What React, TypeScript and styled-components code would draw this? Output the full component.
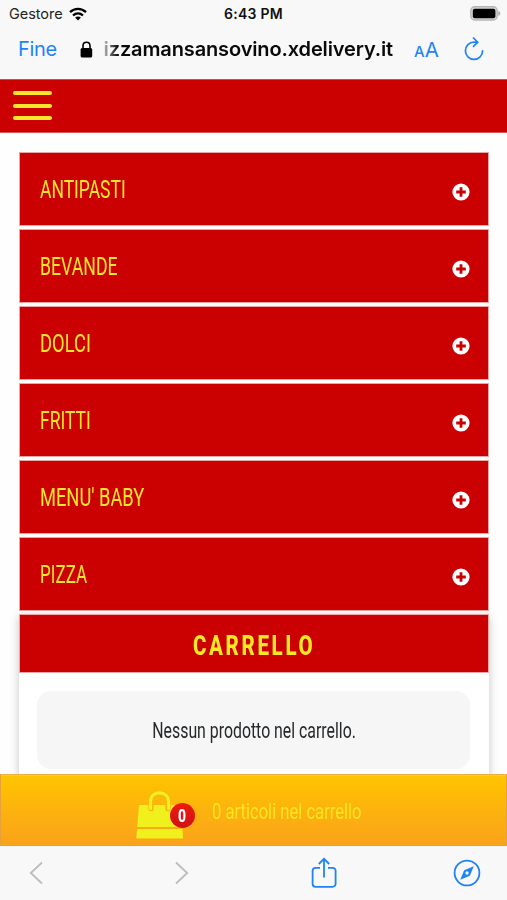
import React from 'react';
import styled, { createGlobalStyle } from 'styled-components';

const GlobalStyle = createGlobalStyle`
  * { box-sizing: border-box; }
  body { margin: 0; background: #fff; }
`;

const red = '#cb0000';
const yellow = '#ffe62b';
const blue = '#1f83f5';

const Screen = styled.div`
  display: flex;
  flex-direction: column;
  width: 507px;
  height: 900px;
  overflow: hidden;
  background: #fefefe;
  font-family: Roboto, 'Liberation Sans', sans-serif;
`;

const BrowserTop = styled.header`
  flex: none;
  height: 79px;
  background: #f8f8f8;
  font-family: Inter, 'Liberation Sans', sans-serif;
`;

const StatusBar = styled.div`
  display: grid;
  grid-template-columns: 1fr auto 1fr;
  align-items: center;
  height: 27px;
  padding: 0 6px 0 9px;
`;

const Carrier = styled.div`
  display: flex;
  align-items: center;
  gap: 6px;
  font-size: 14.5px;
  letter-spacing: -0.05px;
  color: #222;
`;

const Clock = styled.div`
  font-size: 14px;
  font-weight: 600;
  letter-spacing: 0.25px;
  margin-right: 3px;
  color: #111;
`;

const BatterySlot = styled.div`
  display: flex;
  justify-content: flex-end;
`;

const AddressBar = styled.div`
  display: flex;
  align-items: center;
  height: 44px;
  padding-left: 18px;
`;

const Done = styled.a`
  width: 62px;
  font-size: 20px;
  letter-spacing: -0.35px;
  color: ${blue};
`;

const Address = styled.div`
  width: 293px;
  margin-left: 7px;
  overflow: hidden;
  display: flex;
  justify-content: flex-end;
  white-space: nowrap;
  font-size: 20px;
  line-height: 28px;
  font-weight: 600;
  letter-spacing: -0.13px;
  color: #0a0a0a;
  mask-image: linear-gradient(to right, transparent 0, rgba(0, 0, 0, 0.4) 6px, #000 18px);
`;

const TextSize = styled.div`
  display: flex;
  align-items: baseline;
  margin-left: 21px;
  width: 50px;
  color: ${blue};
  font-size: 20.5px;
`;

const SmallA = styled.span`
  font-size: 15px;
  font-weight: 500;
`;

const SiteHeader = styled.div`
  flex: none;
  display: flex;
  align-items: flex-start;
  height: 54px;
  padding: 11px 0 0 13px;
  background: ${red};
  border-top: 1px solid #d0494b;
  border-bottom: 1px solid #dc5555;
`;

const MenuButton = styled.div`
  display: flex;
  flex-direction: column;
  justify-content: space-between;
  width: 39px;
  height: 29px;
`;

const MenuLine = styled.span`
  height: 4px;
  border-radius: 2px;
  background: ${yellow};
`;

const Content = styled.main`
  flex: 1;
  min-height: 0;
  overflow: hidden;
  padding: 19px 18px 0 19px;
`;

const Category = styled.div`
  display: flex;
  align-items: center;
  justify-content: space-between;
  height: 74px;
  margin-bottom: 3px;
  padding: 0 18px 0 20px;
  background: ${red};
  background-clip: padding-box;
  border: 1px solid rgba(203, 0, 0, 0.35);
`;

const Narrow = styled.span<{ $scale: number; $center?: boolean }>`
  display: inline-block;
  white-space: nowrap;
  transform: scaleX(${(p) => p.$scale});
  transform-origin: ${(p) => (p.$center ? 'center' : 'left center')};
`;

const CategoryName = styled(Narrow)`
  font-size: 26.5px;
  font-weight: 450;
  line-height: 32px;
  color: ${yellow};
`;

const PlusSlot = styled.div`
  display: flex;
  padding-top: 5px;
`;

const Cart = styled.section`
  height: 220px;
  background: #fff;
  box-shadow: 0 2px 9px rgba(0, 0, 0, 0.22);
`;

const CartTitle = styled.div`
  display: flex;
  align-items: center;
  justify-content: center;
  height: 59px;
  padding-top: 4px;
  background: ${red};
  background-clip: padding-box;
  border: 1px solid rgba(203, 0, 0, 0.35);
`;

const CartTitleText = styled(Narrow)`
  font-size: 27.5px;
  font-weight: 800;
  letter-spacing: 3.6px;
  color: #fbe824;
`;

const EmptyCart = styled.div`
  display: flex;
  align-items: center;
  justify-content: center;
  height: 78px;
  margin: 18px 19px 0 18px;
  padding: 1px 0 0 1px;
  border-radius: 14px;
  background: #f6f6f6;
`;

const EmptyText = styled(Narrow)`
  font-size: 21.5px;
  font-weight: 450;
  color: #25282b;
`;

const CartBar = styled.div`
  flex: none;
  display: flex;
  height: 72px;
  padding: 16px 0 0 135px;
  background: linear-gradient(#ffc400, #faa21b);
  border: 1px solid #e6a13a;
  border-top-color: #efae45;
  box-shadow: inset 0 1px 0 #ffca3c;
`;

const BagSlot = styled.div`
  position: relative;
  width: 76px;
  height: 48px;
`;

const Badge = styled.div`
  position: absolute;
  left: 34px;
  top: 12px;
  width: 25px;
  height: 25px;
  display: flex;
  align-items: center;
  justify-content: center;
  border-radius: 50%;
  background: linear-gradient(#f01a0c, #cf1018);
  color: #fff;
  font-size: 17.5px;
  font-weight: 800;
`;

const CartBarText = styled(Narrow)`
  margin-top: 8px;
  height: 26px;
  line-height: 26px;
  font-size: 21.5px;
  color: #fce51f;
`;

const BrowserBottom = styled.nav`
  flex: none;
  display: grid;
  grid-template-columns: 146px 136px 142px 28px;
  align-items: center;
  height: 54px;
  padding-left: 29px;
  background: #f8f8f8;
`;

const Plus = () => (
  <svg width="18" height="18" viewBox="0 0 18 18">
    <circle cx="9" cy="9" r="8.6" fill="#fff" />
    <path d="M9 4.2v9.6M4.2 9h9.6" stroke={red} strokeWidth="2.8" />
  </svg>
);

const Wifi = () => (
  <svg width="18" height="14" viewBox="0 0 18 14" fill="none" stroke="#000" strokeWidth="2.3">
    <path d="M1 5.2C5.6 .8 12.4 .8 17 5.2M4 8.5c2.9-2.7 7.1-2.7 10 0" />
    <path d="M9 13.6l-2.9-3.1c1.6-1.5 4.2-1.5 5.8 0z" fill="#000" stroke="none" />
  </svg>
);

const Battery = () => (
  <svg width="31" height="15" viewBox="0 0 31 15">
    <rect x=".8" y=".8" width="26.4" height="13.2" rx="4" fill="#d8d8d8" stroke="#b5b5b5" strokeWidth="1.4" />
    <rect x="2.8" y="2.7" width="22.6" height="9.5" rx="2" fill="#000" />
    <path d="M28.3 5c2.6.6 2.6 4.2 0 4.8z" fill="#aaa" />
  </svg>
);

const Lock = () => (
  <svg width="13" height="17" viewBox="0 0 13 17">
    <path d="M3 8V4.9C3 .1 10 .1 10 4.9V8" fill="none" stroke="#000" strokeWidth="1.6" />
    <rect x=".6" y="7" width="11.6" height="9.5" rx="1.6" fill="#000" />
  </svg>
);

const Reload = () => (
  <svg width="20" height="24" viewBox="0 0 20 24" fill="none" stroke={blue} strokeWidth="1.7" strokeLinecap="round">
    <path d="M13.2 5.2H10a8.6 8.6 0 1 0 8.6 8.6" />
    <path d="M9.5 1l4.2 4.2-4.2 4.2" />
  </svg>
);

const Bag = () => (
  <svg width="48" height="48" viewBox="0 0 48 48">
    <path d="M3 14h41l2.2 22H1.2z M1 38h45.5l.5 9.5H.3z" fill="#f0f01c" />
    <path d="M15 17.5V10c0-10.3 17-10.3 17 0v7.5" fill="none" stroke="#fbb40e" strokeWidth="5.4" strokeLinecap="round" />
    <path d="M14.5 17.5V10c0-10.8 18-10.8 18 0v7.5" fill="none" stroke="#f0f01c" strokeWidth="3.2" strokeLinecap="round" />
  </svg>
);

const Chevron = ({ d }: { d: string }) => (
  <svg width="14" height="24" viewBox="0 0 14 24" fill="none" stroke="#bdbdbd" strokeWidth="1.8">
    <path d={d} />
  </svg>
);

const Share = () => (
  <svg width="26" height="32" viewBox="0 0 26 32" fill="none" stroke={blue} strokeWidth="1.8">
    <path d="M9 10.8H4.6a3 3 0 0 0-3 3v13a3 3 0 0 0 3 3h17a3 3 0 0 0 3-3v-13a3 3 0 0 0-3-3H17" />
    <path d="M13 20.5V2M7.8 7L13 1.8 18.2 7" />
  </svg>
);

const Compass = () => (
  <svg width="28" height="28" viewBox="0 0 28 28">
    <circle cx="14" cy="14" r="12.4" fill="none" stroke={blue} strokeWidth="1.8" />
    <path d="M20.8 7.2l-4 9.6-9.6 4 4-9.6z" fill={blue} />
    <circle cx="14" cy="14" r="1.7" fill="#f8f8f8" />
  </svg>
);

const categories = [
  { name: 'ANTIPASTI', scale: 0.66 },
  { name: 'BEVANDE', scale: 0.668 },
  { name: 'DOLCI', scale: 0.692 },
  { name: 'FRITTI', scale: 0.66 },
  { name: "MENU' BABY", scale: 0.69 },
  { name: 'PIZZA', scale: 0.644 },
];

export default function App() {
  return (
    <Screen>
      <GlobalStyle />
      <BrowserTop>
        <StatusBar>
          <Carrier>Gestore <Wifi /></Carrier>
          <Clock>6:43 PM</Clock>
          <BatterySlot><Battery /></BatterySlot>
        </StatusBar>
        <AddressBar>
          <Done>Fine</Done>
          <Lock />
          <Address>izzamansansovino.xdelivery.it</Address>
          <TextSize><SmallA>A</SmallA>A</TextSize>
          <Reload />
        </AddressBar>
      </BrowserTop>
      <SiteHeader>
        <MenuButton><MenuLine /><MenuLine /><MenuLine /></MenuButton>
      </SiteHeader>
      <Content>
        {categories.map((c) => (
          <Category key={c.name}>
            <CategoryName $scale={c.scale}>{c.name}</CategoryName>
            <PlusSlot><Plus /></PlusSlot>
          </Category>
        ))}
        <Cart>
          <CartTitle><CartTitleText $scale={0.745} $center>CARRELLO</CartTitleText></CartTitle>
          <EmptyCart><EmptyText $scale={0.737} $center>Nessun prodotto nel carrello.</EmptyText></EmptyCart>
        </Cart>
      </Content>
      <CartBar>
        <BagSlot><Bag /><Badge><Narrow $scale={0.8} $center>0</Narrow></Badge></BagSlot>
        <CartBarText $scale={0.772}>0 articoli nel carrello</CartBarText>
      </CartBar>
      <BrowserBottom>
        <Chevron d="M13 1.5L1.8 12 13 22.5" />
        <Chevron d="M1 1.5L12.2 12 1 22.5" />
        <Share />
        <Compass />
      </BrowserBottom>
    </Screen>
  );
}
